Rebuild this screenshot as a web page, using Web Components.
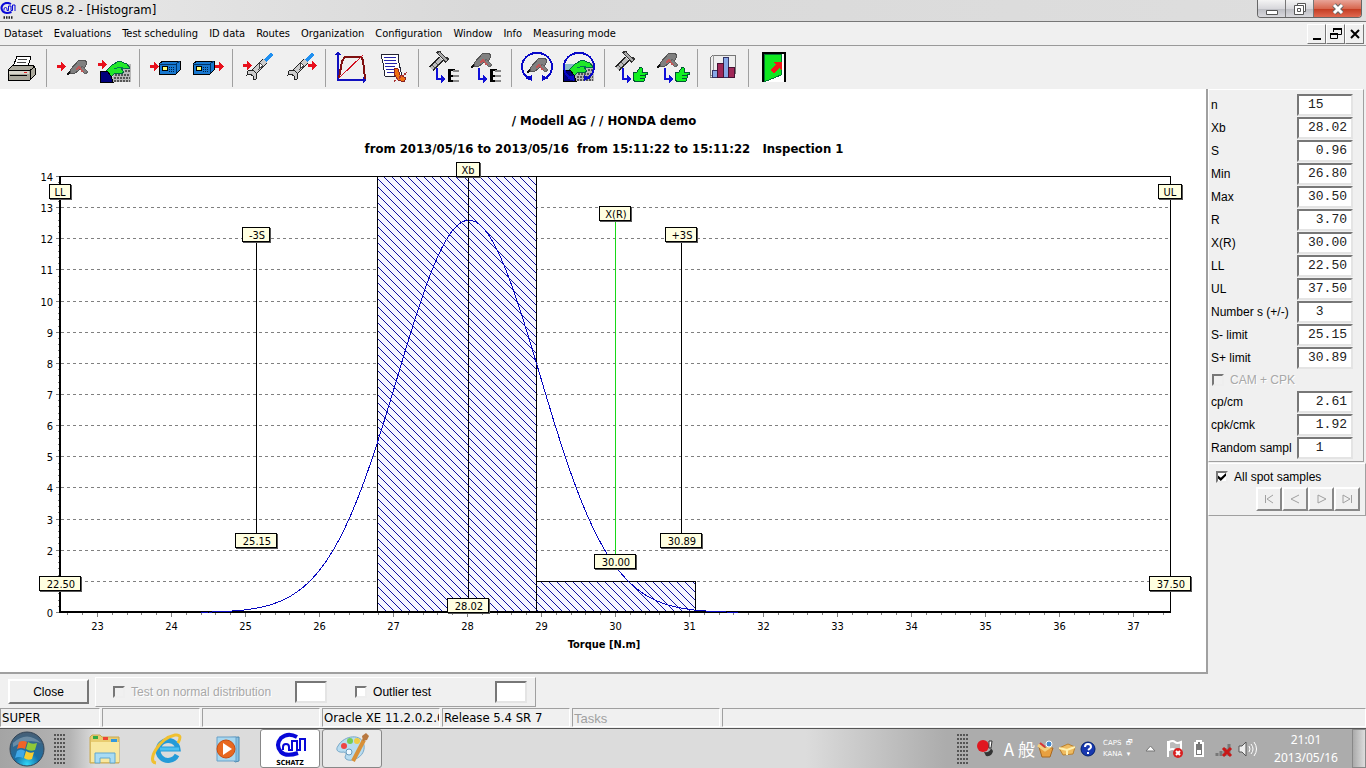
<!DOCTYPE html>
<html lang="en">
<head>
    <meta charset="UTF-8">
    <title>CEUS 8.2 - [Histogram]</title>
    <style>
        body {
            margin: 0;
            background: #f0f0f0;
            color: #000;
            font: 12px/16px "Liberation Sans", Arial, sans-serif;
            --ui: "DejaVu Sans Condensed", "DejaVu Sans", Tahoma, sans-serif;
        }
    </style>
</head>
<body>
    <ceus-app></ceus-app>

    <script>
        // Shared helper: open a shadow root and fill it
        class BaseElement extends HTMLElement {
            constructor() {
                super();
                this.attachShadow({mode: 'open'});
            }
            connectedCallback() {
                this.shadowRoot.innerHTML = `<style>* { box-sizing: border-box; } ${this.styles()}</style>${this.markup()}`;
            }
            styles() { return ''; }
            markup() { return '<slot></slot>'; }
        }

        /* ---------- icon parts ---------- */
        const redArrow = (x, y) => `<path d="M${x} ${y - 1}h4v-3l5 4.500-5 4.500v-3h-4z" fill="#e8101c"/>`;
        const drill = (x, y) => `<g transform="translate(${x} ${y})">
            <path d="M0 16l5-5" stroke="#111" stroke-width="2"/>
            <path d="M3 11L12 1h6l2 3-2 4-3 1-8 6-4-1z" fill="#808080" stroke="#555"/>
            <path d="M15 7l6 6-3 2-5-5z" fill="#808080" stroke="#666"/>
            <path d="M9 11l3-3 4 5" fill="none" stroke="#c05858" stroke-width="2"/></g>`;
        const hand = (x, y) => `<g transform="translate(${x} ${y})">
            <path d="M14 3h17v18H12z" fill="#b8b8b8"/>
            <path d="M15 14h15M14 17h16M14 20h16M23 6h7M25 10h6" stroke="#555" stroke-width="2" stroke-dasharray="2 1"/>
            <path d="M7 9l5-5 7-4 8 3 3 4-4 1-5-1 3 4-3 2-6-1-4 4-5-2z" fill="#20e828" stroke="#064"/>
            <path d="M14 8l6-2 5 2" fill="none" stroke="#075"/>
            <path d="M0 11l7-1 4 5 2 6H0z" fill="#00007c" stroke="#000"/></g>`;
        const device = (x, y) => `<g transform="translate(${x} ${y})">
            <path d="M0 4l4-3h17v9l-4 4H0z" fill="#1878d0" stroke="#000"/>
            <path d="M0 4h17v9M17 4l4-3" fill="none" stroke="#036"/>
            <path d="M3 6h5v4H3z" fill="#ff7" stroke="#000"/>
            <path d="M10 7h6M10 9h6M10 11h6" stroke="#024" stroke-dasharray="1 1"/></g>`;
        const wrench = (x, y) => `<g transform="translate(${x} ${y})">
            <path d="M19 8l7-7" stroke="#2090f0" stroke-width="4"/>
            <path d="M6 21L19 8" stroke="#222" stroke-width="7"/>
            <path d="M7 20L19 8" stroke="#ccc" stroke-width="5"/>
            <path d="M14 10l3 3-4 3z" fill="#fff" stroke="#444"/>
            <path d="M2 18l5-1 4 4-1 5-3 1v-4l-3-2-3 1z" fill="#ccc" stroke="#222"/></g>`;
        const hammer = (x, y) => `<g transform="translate(${x} ${y})">
            <path d="M2 18L12 8" stroke="#222" stroke-width="6"/>
            <path d="M2 18L12 8" stroke="#bbb" stroke-width="4"/>
            <path d="M3 14l4 4M6 11l4 4" stroke="#555"/>
            <path d="M9 1l9 9M8 3l3-3M15 11l4-4" stroke="#333" stroke-width="4"/>
            <path d="M10 2l8 8" stroke="#aaa" stroke-width="2"/></g>`;
        const hook = `<path d="M11 17v11h5" fill="none" stroke="#1010d8" stroke-width="2"/><path d="M15 24l5 4-5 4z" fill="#1010d8"/>`;
        const levels = `<path d="M23 18v13" stroke="#000" stroke-width="3"/><path d="M23 19h6M23 25h6M23 30h6" stroke="#000" stroke-width="2"/><path d="M27 20h6M27 25h6M27 30h6" stroke="#888" stroke-width="2"/>`;
        const thumb = `<path d="M21 22l4-1 3-5 2 1v4h5v2h-2l1 2-1 2-1 3-8 1-3-2z" fill="#10f020" stroke="#053"/><path d="M28 24h5M28 27h5" stroke="#053"/>`;
        const orbit = `<path d="M9 27A15 14 0 1 1 27 27" fill="none" stroke="#0808c8" stroke-width="2"/><path d="M6 27l7-3v6zM30 27l-7-3v6z" fill="#0808c8"/>`;
        const logo = `<path d="M22 4Q13-1 6 5Q0 12 6 19Q11 24 23 20" fill="none" stroke="#0808d8" stroke-width="4"/><path d="M8 17v-3q0-3 3-3t3 3v3h3V8h5v9h3V6h5v12" fill="none" stroke="#0808d8" stroke-width="2"/>`;

        const icons = {
            print: `<path d="M10 16l4-11h14l-3 11z" fill="#fff" stroke="#000"/><path d="M15 8h9M14 11h9M13 14h9" stroke="#444"/>
                <path d="M5 19l5-5h20l2 3v7l-5 5H5z" fill="#aaa89c" stroke="#000"/><path d="M5 19h22l5-3M27 19v10M7 24h17" fill="none" stroke="#000"/><path d="M6 20h20v3H6z" fill="#d8d6cc"/><path d="M21 21h3" stroke="#d22"/>`,
            tool: redArrow(3, 15) + drill(13, 8),
            manual: hand(4, 10) + redArrow(2, 13),
            deviceIn: redArrow(3, 15) + device(12, 9),
            deviceOut: device(4, 9) + redArrow(26, 15),
            wrenchIn: redArrow(3, 14) + wrench(6, 2),
            wrenchOut: wrench(5, 2) + redArrow(26, 14),
            curve: `<path d="M5 2v27h27" fill="none" stroke="#1010c0" stroke-width="2"/><path d="M2 4l3-4 3 4zM30 26l4 3-4 3z" fill="#1010c0"/><path d="M6 27L9 10l3-4h16l2 3 2 19" fill="none" stroke="#801010" stroke-width="2"/><path d="M6 27L30 4" stroke="#d01020"/>`,
            report: `<path d="M6 3h18l-1 5 4 17H10L8 12z" fill="#fff" stroke="#223"/><path d="M9 6h12M9 9h12M10 12h12M10 15h10M11 18h9M12 21h7" stroke="#22a"/><path d="M19 17l4 1 2 6 6 3-2 4-6-2-4-6z" fill="#f07010" stroke="#822"/><path d="M19 30l13-8" stroke="#a33" stroke-width="2" stroke-dasharray="2 1"/>`,
            hammerList: hammer(3, 0) + hook + levels,
            drillList: drill(3, 1) + hook + levels,
            drillLoop: orbit + drill(8, 6),
            manualLoop: `<path d="M2 13h31v17H2z" fill="#88b8c8"/>` + hand(2, 9) + orbit,
            hammerOk: hammer(3, 0) + hook + thumb,
            drillOk: drill(3, 1) + hook + thumb,
            bars: `<path d="M5 7l3-3h22v19l-3 3H5z" fill="#eee" stroke="#777"/><path d="M8 4v19M5 26l3-3h22" fill="none" stroke="#999"/><path d="M7 19h5v7H7zM18 6h5v20h-5z" fill="#88a8e8" stroke="#336"/><path d="M12 12h6v14h-6zM23 16h6v10h-6z" fill="#a02858" stroke="#413"/>`,
            exit: `<path d="M7 31V2h22v29" fill="#fff" stroke="#000" stroke-width="2"/><path d="M8 3h17v21L8 31z" fill="#10e820" stroke="#073"/><path d="M14 19l6-6-3-2h9v9l-3-3-5 6z" fill="#f01818"/>`
        };

        /* ---------- window chrome ---------- */
        class TitleBar extends BaseElement {
            styles() {
                return `
                :host { display: flex; height: 22px; align-items: flex-start; background: linear-gradient(90deg, #e9e9e9, #d9d9d9 35%, #dedede); border-bottom: 1px solid #777; }
                svg { display: block; }
                .logo { width: 16px; height: 18px; margin: 2px 5px 0 0; }
                h1 { flex: 1; margin: 0; font: 13px/20px var(--ui); }
                .buttons { display: flex; margin-right: 4px; border: 1px solid #666; border-top: 0; border-radius: 0 0 4px 4px; overflow: hidden; }
                button { display: grid; place-items: center; width: 28px; height: 17px; padding: 0; border: 0; border-right: 1px solid #777; background: linear-gradient(#f4f4f4, #d8d8dc 50%, #bbbcc2 51%, #d8d8dc); }
                .close { width: 47px; border: 0; background: linear-gradient(#e8a498, #d86850 50%, #c23a20 51%, #e06850); }`;
            }
            markup() {
                return `
                <svg class="logo" viewBox="0 0 32 36" aria-hidden="true">${logo}<path d="M7 31h18" stroke="#222" stroke-width="5" stroke-dasharray="3 2"/></svg>
                <h1>CEUS 8.2 - [Histogram]</h1>
                <div class="buttons">
                    <button aria-label="Minimize"><svg width="14" height="14"><path d="M1.500 8.500h11v4h-11z" fill="#fff" stroke="#555"/></svg></button>
                    <button aria-label="Restore"><svg width="14" height="14" fill="#fff" stroke="#555"><path d="M4.500 1.500h8v8h-8z"/><path d="M1.500 3.500h9v9h-9z"/><path d="M4.500 6.500h3v3h-3z"/></svg></button>
                    <button class="close" aria-label="Close window"><svg width="14" height="14"><path d="M3 3l8 8M11 3l-8 8" stroke="#666" stroke-width="5"/><path d="M3 3l8 8M11 3l-8 8" stroke="#fff" stroke-width="3"/></svg></button>
                </div>`;
            }
        }

        class MenuBar extends BaseElement {
            styles() {
                return `
                :host { display: flex; height: 24px; align-items: center; border-bottom: 1px solid #999; }
                nav { display: flex; flex: 1; gap: 11px; padding-left: 4px; }
                button { padding: 0; border: 0; background: none; font: 11px/16px var(--ui); color: #000; }
                .mdi { display: flex; margin-right: 2px; }
                .mdi button { display: grid; place-items: center; width: 19px; height: 20px; background: #f0f0f0; border: 1px solid; border-color: #fff #777 #777 #fff; }`;
            }
            markup() {
                const items = ['Dataset', 'Evaluations', 'Test scheduling', 'ID data', 'Routes', 'Organization', 'Configuration', 'Window', 'Info', 'Measuring mode'];
                return `
                <nav>${items.map(i => `<button>${i}</button>`).join('')}</nav>
                <div class="mdi">
                    <button aria-label="Minimize document"><svg width="14" height="14"><path d="M3 12h8" stroke="#000" stroke-width="2"/></svg></button>
                    <button aria-label="Restore document"><svg width="14" height="14" fill="none" stroke="#000"><path d="M4.500 5V1.500h8v6H9"/><path d="M4 2h9M1 7h8" stroke-width="2"/><path d="M1.500 6.500h7v5h-7z"/></svg></button>
                    <button aria-label="Close document"><svg width="14" height="14"><path d="M3 3l8 8M11 3l-8 8" stroke="#000" stroke-width="2"/></svg></button>
                </div>`;
            }
        }

        class ToolBar extends BaseElement {
            styles() {
                return `
                :host { display: flex; height: 43px; align-items: center; }
                .group { display: flex; }
                .group + .group { border-left: 1px solid #a0a0a0; margin-left: 4px; padding-left: 4px; }
                button { display: grid; place-items: center; width: 42px; height: 38px; padding: 0; border: 0; background: none; }`;
            }
            markup() {
                const groups = [['print'], ['tool', 'manual'], ['deviceIn', 'deviceOut'], ['wrenchIn', 'wrenchOut'], ['curve', 'report'],
                    ['hammerList', 'drillList'], ['drillLoop', 'manualLoop'], ['hammerOk', 'drillOk'], ['bars'], ['exit']];
                return groups.map(g => `<div class="group">${g.map(n =>
                    `<button aria-label="${n}"><svg width="36" height="33" viewBox="0 0 36 33" shape-rendering="crispEdges">${icons[n]}</svg></button>`).join('')}</div>`).join('');
            }
        }

        /* ---------- histogram ---------- */
        class HistogramChart extends BaseElement {
            styles() {
                return `
                :host { display: block; background: #fff; min-width: 0; min-height: 0; border-bottom: 2px solid #a0a0a0; }
                svg { display: block; width: 100%; height: 100%; font: 11px var(--ui); }
                text { white-space: pre; text-anchor: middle; }
                .end { text-anchor: end; }
                .head { font-weight: bold; font-size: 13px; }
                .axis { font-weight: bold; font-size: 11px; }
                .crisp { shape-rendering: crispEdges; }`;
            }
            markup() {
                const x = v => Math.round(60 + (v - 22.5) * 74) + 0.5;
                const y = v => Math.round(523 - v * 31.14) + 0.5;
                let grid = '', ticks = '', labels = '';
                for (let v = 0; v <= 14; v++) {
                    if (v > 0 && v < 14) grid += `M61 ${y(v)}H1170`;
                    ticks += `M56 ${y(v)}h4`;
                    // the lower limit tag sits on the label for 1
                    if (v !== 1) labels += `<text class="end" x="53" y="${y(v) + 4}">${v}</text>`;
                    for (let m = 1; m < 5 && v < 14; m++) ticks += `M58 ${y(v + m / 5)}h2`;
                }
                for (let v = 226; v <= 374; v += 2) ticks += `M${x(v / 10)} 524v2`;
                for (let v = 23; v <= 37; v++) {
                    ticks += `M${x(v)} 524v4`;
                    labels += `<text x="${x(v)}" y="541">${v}</text>`;
                }

                // normal distribution around the mean
                let bell = '';
                for (let v = 24.4; v < 31.7; v += 0.05) {
                    const h = 12.6 * Math.exp(-0.5 * ((v - 28.02) / 0.957) ** 2);
                    bell += `${bell ? 'L' : 'M'}${(60.5 + (v - 22.5) * 74).toFixed(1)} ${(523.5 - h * 31.14).toFixed(1)}`;
                }

                const tag = (cx, top, w, label) => `
                    <rect x="${cx - w / 2 + 1}" y="${top + 1}" width="${w}" height="15" fill="#555"/>
                    <rect x="${cx - w / 2 + .5}" y="${top + .5}" width="${w - 1}" height="14" fill="#ffffe1" stroke="#000"/>
                    <text x="${cx + (w > 24 ? 1 : 0)}" y="${top + 12}">${label}</text>`;

                return `
                <svg viewBox="0 0 1206 583" role="img" aria-label="Torque histogram">
                    <defs><pattern id="hatch" width="8" height="8" patternUnits="userSpaceOnUse">
                        <rect width="8" height="8" fill="#f6f6ff"/><path d="M-1 -1L9 9M-1 7L1 9M7 -1L9 1" stroke="#1010a0" shape-rendering="crispEdges"/>
                    </pattern></defs>
                    <text class="head" x="604" y="36">/ Modell AG / / HONDA demo</text>
                    <text class="head" x="604" y="64">from 2013/05/16 to 2013/05/16  from 15:11:22 to 15:11:22   Inspection 1</text>
                    <g class="crisp" fill="none">
                        <path d="${grid}" stroke="#808080" stroke-dasharray="3 3"/>
                        <path d="${ticks}" stroke="#808080"/>
                        <rect x="377.500" y="87.500" width="159" height="436" fill="url(#hatch)" stroke="#000"/>
                        <rect x="536.500" y="492.500" width="159" height="31" fill="url(#hatch)" stroke="#000"/>
                        <path d="M60 87.500H1171M1170.500 87V524" stroke="#000"/>
                        <path d="M60 87V523H1171" stroke="#000" stroke-width="2"/>
                        <path d="${bell}" stroke="#0808c0"/>
                        <path d="M256.500 150V448M681.500 150V448M468.500 87V515" stroke="#000"/>
                        <path d="M615.500 130V470" stroke="#18d818"/>
                    </g>
                    ${labels}
                    <text class="axis" x="604" y="559">Torque [N.m]</text>
                    <g class="tags">
                        ${tag(60, 95, 22, 'LL')}${tag(1170, 95, 24, 'UL')}${tag(468, 73, 24, 'Xb')}
                        ${tag(615, 117, 32, 'X(R)')}${tag(256, 138, 28, '-3S')}${tag(681, 138, 32, '+3S')}
                        ${tag(256, 444, 42, '25.15')}${tag(681, 444, 42, '30.89')}${tag(615, 465, 42, '30.00')}
                        ${tag(60, 487, 42, '22.50')}${tag(1170, 487, 42, '37.50')}${tag(468, 509, 42, '28.02')}
                    </g>
                </svg>`;
            }
        }

        /* ---------- form parts ---------- */
        class StatField extends BaseElement {
            styles() {
                return `
                :host { display: grid; grid-template-columns: 1fr 56px; height: 23px; align-items: center; }
                label { overflow: hidden; white-space: nowrap; }
                input { width: 56px; height: 22px; margin: 0; padding: 0 0 0 9px; background: #fff; border: 2px solid; border-color: #777 #e4e4e4 #e4e4e4 #777; border-radius: 0; font: 13px/16px "Liberation Mono", "Courier New", monospace; white-space: pre; color: #222; }`;
            }
            markup() {
                return `<label for="v">${this.getAttribute('label')}</label><input id="v" value="${this.getAttribute('value')}" readonly>`;
            }
        }

        class CheckField extends BaseElement {
            styles() {
                return `
                :host { display: block; }
                label { display: flex; align-items: center; gap: 6px; white-space: nowrap; }
                input { appearance: none; width: 12px; height: 12px; margin: 0; background: #fff; border: 2px solid; border-color: #777 #eee #eee #777; }
                input:disabled { background: #f0f0f0; }
                input:checked::before { content: ""; display: block; width: 8px; height: 8px; background: #000; clip-path: polygon(0 30%, 35% 60%, 100% 0, 100% 35%, 35% 100%, 0 70%); }
                :host([disabled]) label { color: #a8a8a8; text-shadow: 1px 1px #fff; }`;
            }
            markup() {
                const flags = ['checked', 'disabled'].filter(f => this.hasAttribute(f)).join(' ');
                return `<label><input type="checkbox" ${flags}><slot></slot></label>`;
            }
        }

        class StatPanel extends BaseElement {
            styles() {
                return `
                :host { display: block; border-left: 2px solid #a0a0a0; }
                .stats, .samples { border: 1px solid; border-color: #fff #a0a0a0 #a0a0a0 #fff; }
                .stats { margin-right: 2px; padding: 3px 10px 2px 2px; }
                check-field.cam { height: 21px; padding: 3px 0 0 1px; }
                .samples { margin-top: 1px; padding: 5px 5px 4px 7px; }
                .nav { display: flex; justify-content: flex-end; margin-top: 2px; }
                .nav button { display: grid; place-items: center; width: 26px; height: 24px; padding: 0; background: #f0f0f0; border: 2px solid; border-color: #fff #888 #888 #fff; }`;
            }
            markup() {
                const field = ([l, v]) => `<stat-field label="${l}" value="${v}"></stat-field>`;
                const top = [['n', '15'], ['Xb', '28.02'], ['S', ' 0.96'], ['Min', '26.80'], ['Max', '30.50'], ['R', ' 3.70'], ['X(R)', '30.00'],
                    ['LL', '22.50'], ['UL', '37.50'], ['Number s (+/-)', ' 3'], ['S- limit', '25.15'], ['S+ limit', '30.89']];
                const bottom = [['cp/cm', ' 2.61'], ['cpk/cmk', ' 1.92'], ['Random sampl', ' 1']];
                const nav = [['First', 'M2.500 2v8M10 2L4 6l6 4'], ['Previous', 'M10 2L2 6l8 4'], ['Next', 'M3 10V2l8 4-8 4'], ['Last', 'M2 10V2l7 4-7 4M10.500 2v8']];
                return `
                <div class="stats">${top.map(field).join('')}<check-field class="cam" disabled>CAM + CPK</check-field>${bottom.map(field).join('')}</div>
                <div class="samples">
                    <check-field checked>All spot samples</check-field>
                    <div class="nav">${nav.map(([n, d]) => `<button aria-label="${n} sample" disabled><svg width="13" height="12" fill="none"><path d="${d}" stroke="#a0a0a0"/></svg></button>`).join('')}</div>
                </div>`;
            }
        }

        class TestBar extends BaseElement {
            styles() {
                return `
                :host { display: flex; height: 34px; align-items: center; gap: 6px; padding: 1px 0 0 8px; }
                .close { width: 81px; height: 25px; border: 2px solid; border-color: #fff #777 #777 #fff; background: #f0f0f0; font: inherit; }
                .tests { display: flex; align-items: center; height: 30px; padding: 0 8px 0 17px; border: 1px solid; border-color: #fff #a0a0a0 #a0a0a0 #fff; }
                .outlier { margin: 0 64px 0 28px; }
                input { width: 32px; height: 22px; margin: 0 0 0 24px; padding: 0; border: 2px solid; border-color: #777 #e4e4e4 #e4e4e4 #777; background: #fff; }
                .outlier + input { margin: 0; }`;
            }
            markup() {
                return `
                <button class="close">Close</button>
                <div class="tests">
                    <check-field disabled>Test on normal distribution</check-field><input aria-label="Normal distribution result">
                    <check-field class="outlier">Outlier test</check-field><input aria-label="Outlier result">
                </div>`;
            }
        }

        class StatusBar extends BaseElement {
            styles() {
                return `
                :host { display: grid; grid-template-columns: 100px 98px 118px 118px 128px 148px 1fr; gap: 2px; height: 20px; padding-bottom: 1px; font: 13px/17px var(--ui); }
                span { overflow: hidden; white-space: nowrap; padding-left: 1px; border: 1px solid; border-color: #a0a0a0 #fff #fff #a0a0a0; }
                .idle { color: #a0a0a0; font: 13px/20px "Liberation Sans", sans-serif; }`;
            }
            markup() {
                return `<span>SUPER</span><span></span><span></span><span>Oracle XE 11.2.0.2.0</span><span>Release 5.4 SR 7</span><span class="idle">Tasks</span><span></span>`;
            }
        }

        /* ---------- desktop taskbar ---------- */
        class TaskBar extends BaseElement {
            styles() {
                return `
                :host { display: flex; height: 40px; align-items: center; border-top: 1px solid #555; background: linear-gradient(90deg, #a4a4a4, #b4b4b4 70px, #dcdcdc 95px, #dcdcdc calc(100% - 560px), #acacac calc(100% - 420px)); }
                svg { display: block; }
                button { display: grid; place-items: center; height: 39px; padding: 0; border: 0; background: none; }
                .start { width: 54px; }
                .grip { width: 11px; height: 30px; background: radial-gradient(circle at 1px 1px, #555 1px, transparent 1px) 0 0 / 3px 4px; }
                .apps { display: flex; flex: 1; padding-left: 9px; }
                .apps button { width: 62px; }
                .apps .run { width: 60px; margin-right: 2px; border: 1px solid #888; border-radius: 3px; background: #eaeaea; }
                .apps .active { background: #fff; }
                .tray { display: flex; align-items: center; color: #fff; }
                .tray svg { margin-right: 3px; }
                .tray .grip + svg { margin-left: 8px; }
                .ime { margin: 0 2px 0 7px; font: 17px/20px "Noto Sans CJK JP", sans-serif; white-space: nowrap; }
                .keys { width: 37px; margin-left: 3px; font: 7px/11px "DejaVu Sans", sans-serif; white-space: pre; }
                .clock { width: 92px; text-align: center; font: 12px/18px "Noto Sans", sans-serif; }
                .desk { width: 14px; border: 1px solid #888; background: linear-gradient(90deg, #aaa, #ddd); }`;
            }
            markup() {
                return `
                <button class="start" aria-label="Start"><svg width="38" height="38" viewBox="0 0 38 38">
                    <defs><radialGradient id="orb" cx=".5" cy=".95" r=".9"><stop offset="0" stop-color="#30d8f8"/><stop offset=".4" stop-color="#1870a8"/><stop offset="1" stop-color="#456078"/></radialGradient></defs>
                    <circle cx="19" cy="19" r="17" fill="url(#orb)" stroke="#345"/><path d="M5 13Q19 0 33 13Q20 8 5 17" fill="#fff" opacity=".25"/>
                    <path d="M11 12q4-2 8 0l-2 7q-4-2-8 0z" fill="#f06428"/><path d="M20 12q4 3 9 1l-2 7q-5 2-9-1z" fill="#90c838"/><path d="M9 21q4-3 8 0l-2 7q-4-2-8 0z" fill="#40a8e8"/><path d="M18 21q4 3 8 1l-2 7q-4 2-8-1z" fill="#f8cc30"/>
                </svg></button>
                <span class="grip"></span>
                <div class="apps">
                    <button aria-label="Explorer"><svg width="34" height="32" viewBox="0 0 34 32"><path d="M2 4l2-2h8l2 2h17v26H2z" fill="#e8cc70" stroke="#c8a850"/><path d="M5 3h5v3H5z" fill="#3a4"/><path d="M15 4h5v3h-5z" fill="#e43"/><path d="M23 6h6v3h-6z" fill="#39d"/><path d="M3 9h28v20H3z" fill="#f8e8a0"/><path d="M7 30V20h20v10h-5v-5H12v5z" fill="#a8dcf4" stroke="#60a8d0"/></svg></button>
                    <button aria-label="Internet Explorer"><svg width="34" height="32" viewBox="0 0 34 32"><path d="M27 22A10 10 0 1 1 28 16H10" fill="none" stroke="#249bd8" stroke-width="5"/><path d="M10 16h19" stroke="#4cc0f0" stroke-width="3"/><path d="M6 30C-4 29 9 5 25 2q8-1 3 8" fill="none" stroke="#f0c030" stroke-width="3"/></svg></button>
                    <button aria-label="Media Player"><svg width="30" height="30" viewBox="0 0 30 30"><path d="M5 4l20-1v24l-4 1z" fill="#88c0e0" stroke="#4888b0"/><path d="M3 3h19v24H3z" fill="#a8d8f0" stroke="#68a0c8"/><circle cx="12" cy="15" r="9" fill="#e86820" stroke="#c84c10"/><path d="M9 9l9 6-9 6z" fill="#fff"/></svg></button>
                    <button class="run active" aria-label="CEUS"><svg width="34" height="36" viewBox="0 0 34 36"><g transform="translate(2 2)">${logo}</g><text x="17" y="34" text-anchor="middle" font-family="DejaVu Sans Condensed" font-weight="bold" font-size="7">SCHATZ</text></svg></button>
                    <button class="run" aria-label="Paint"><svg width="36" height="34" viewBox="0 0 36 34"><path d="M4 14C10 3 28 1 30 13S17 31 12 27c-3-3 3-5-2-7-6 1-9-2-6-6z" fill="#b8dcf0" stroke="#78a8c8"/><circle cx="10" cy="14" r="3" fill="#e44"/><circle cx="16" cy="9" r="3" fill="#7c5"/><circle cx="23" cy="9" r="3" fill="#ec4"/><circle cx="15" cy="20" r="3" fill="#eef8ff" stroke="#69b"/><path d="M19 29L30 8" stroke="#d89038" stroke-width="4"/><path d="M29 9l-1-5 4-3 3 3-2 4z" fill="#b87840"/></svg></button>
                </div>
                <div class="tray">
                    <span class="grip"></span>
                    <svg width="18" height="22" viewBox="0 0 18 22"><circle cx="7" cy="8" r="6" fill="#e01820"/><path d="M8 14q6 1 7-4l2 3q-1 6-7 5z" fill="#333"/><path d="M13 3h3l-1 7h-2z" fill="#fff" stroke="#333"/></svg>
                    <span class="ime">A 般</span>
                    <svg width="18" height="20" viewBox="0 0 18 20"><path d="M2 8l14 1-3 9H5z" fill="#e8a040" stroke="#a86820"/><path d="M1 6l7 5 6-4" fill="none" stroke="#f4d080" stroke-width="3"/><circle cx="12" cy="5" r="3" fill="#48c" stroke="#fff"/><path d="M3 4l5 4" stroke="#d33" stroke-width="2"/></svg>
                    <svg width="18" height="20" viewBox="0 0 18 20"><path d="M1 9l9-4 7 3-2 7-10 1z" fill="#f0bc60" stroke="#b88030"/><path d="M1 9l8 2 8-3M9 11v5" fill="none" stroke="#fff0b0" stroke-width="2"/></svg>
                    <svg width="18" height="18" viewBox="0 0 18 18"><circle cx="9" cy="9" r="7" fill="#1838b0" stroke="#002070"/><path d="M6 7q0-3 3-3t3 3q0 1-3 3M9 12v2" fill="none" stroke="#fff" stroke-width="2"/></svg>
                    <div class="keys">CAPS  🗗
KANA  ▾</div>
                    <svg width="22" height="20" viewBox="0 0 22 20"><path d="M6 12h9l-4.500-5z" fill="#fff" stroke="#777"/></svg>
                    <svg width="21" height="20" viewBox="0 0 21 20"><path d="M3 18V2M4 3q4-2 6 0t6 0v8q-4 2-6 0t-6 0z" fill="#bbb" stroke="#fff" stroke-width="2"/><circle cx="13" cy="14" r="5" fill="#d82020"/><path d="M11 12l4 4M15 12l-4 4" stroke="#fff" stroke-width="2"/></svg>
                    <svg width="21" height="20" viewBox="0 0 21 20"><path d="M8 4V2h4v2h2v13H6V4z" fill="#777" stroke="#fff" stroke-width="2"/><path d="M8 11h4v4H8z" fill="#fff"/></svg>
                    <svg width="21" height="20" viewBox="0 0 21 20"><path d="M4 17v-3M8 17v-5M12 17V9M16 17V5" stroke="#777" stroke-width="3"/><path d="M10 9l8 8M18 9l-8 8" stroke="#c81818" stroke-width="3"/></svg>
                    <svg width="20" height="20" viewBox="0 0 20 20"><path d="M2 7h3l4-4v14l-4-4H2z" fill="#eee" stroke="#555"/><path d="M12 7q2 3 0 6M14 5q4 5 0 10M17 3q5 7 0 14" fill="none" stroke="#fff"/></svg>
                    <div class="clock">21:01<br>2013/05/16</div>
                </div>
                <button class="desk" aria-label="Show desktop"></button>`;
            }
        }

        class CeusApp extends BaseElement {
            styles() {
                return `
                :host { display: flex; flex-direction: column; height: 100vh; }
                main { display: grid; grid-template-columns: 1fr 160px; flex: 1; min-height: 0; }`;
            }
            markup() {
                return `
                <title-bar></title-bar><menu-bar></menu-bar><tool-bar></tool-bar>
                <main><histogram-chart></histogram-chart><stat-panel></stat-panel></main>
                <test-bar></test-bar><status-bar></status-bar><task-bar></task-bar>`;
            }
        }

        customElements.define('title-bar', TitleBar);
        customElements.define('menu-bar', MenuBar);
        customElements.define('tool-bar', ToolBar);
        customElements.define('histogram-chart', HistogramChart);
        customElements.define('stat-field', StatField);
        customElements.define('check-field', CheckField);
        customElements.define('stat-panel', StatPanel);
        customElements.define('test-bar', TestBar);
        customElements.define('status-bar', StatusBar);
        customElements.define('task-bar', TaskBar);
        customElements.define('ceus-app', CeusApp);
    </script>
</body>
</html>
